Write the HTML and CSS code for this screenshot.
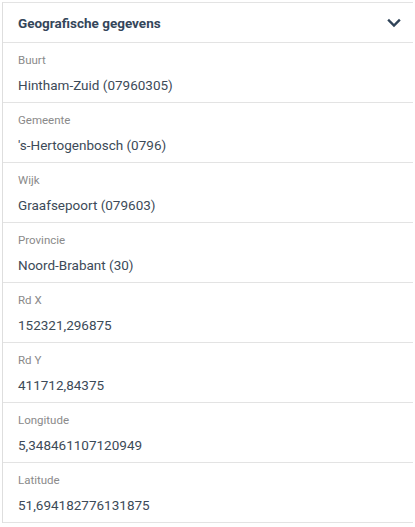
FILE: index.html
```html
<!DOCTYPE html>
<html lang="nl">
<head>
<meta charset="utf-8">
<title>Geografische gegevens</title>
<link rel="stylesheet" href="styles.css">
</head>
<body>
<section class="panel">
  <header class="panel-header">
    <h2 class="panel-title">Geografische gegevens</h2>
    <svg class="chevron" width="14" height="10" viewBox="0 0 14 10" aria-hidden="true">
      <path d="M2 2.5 L7 7.5 L12 2.5" fill="none" stroke="#2f4358" stroke-width="2.4" stroke-linecap="square"/>
    </svg>
  </header>
  <div class="row"><div class="label">Buurt</div><div class="value">Hintham-Zuid (07960305)</div></div>
  <div class="row"><div class="label">Gemeente</div><div class="value">'s-Hertogenbosch (0796)</div></div>
  <div class="row"><div class="label">Wijk</div><div class="value">Graafsepoort (079603)</div></div>
  <div class="row"><div class="label">Provincie</div><div class="value">Noord-Brabant (30)</div></div>
  <div class="row"><div class="label">Rd X</div><div class="value">152321,296875</div></div>
  <div class="row"><div class="label">Rd Y</div><div class="value">411712,84375</div></div>
  <div class="row"><div class="label">Longitude</div><div class="value">5,348461107120949</div></div>
  <div class="row"><div class="label">Latitude</div><div class="value">51,694182776131875</div></div>
</section>
</body>
</html>
```
FILE: styles.css
```css
html, body {
  margin: 0;
  padding: 0;
  background: #ffffff;
}
body {
  padding: 2px 0 0 2px;
  font-family: Roboto, "Noto Sans", sans-serif;
}
.panel {
  width: 410px;
  border-left: 1px solid #dedede;
  border-top: 1px solid #e3e3e3;
}
.panel-header {
  height: 40px;
  box-sizing: border-box;
  display: flex;
  align-items: center;
  justify-content: space-between;
  padding: 0 12px 0 15px;
  border-bottom: 1px solid #e3e3e3;
}
.panel-title {
  margin: 0;
  font-size: 13.5px;
  font-weight: 700;
  color: #34465a;
}
.chevron {
  display: block;
}
.row {
  height: 60px;
  box-sizing: border-box;
  padding: 9px 0 0 15px;
  border-bottom: 1px solid #e3e3e3;
}
.label {
  font-size: 11.5px;
  line-height: 16px;
  color: #8a8a8a;
}
.value {
  margin-top: 7px;
  font-size: 13.5px;
  line-height: 20px;
  color: #3c4a58;
}
```
